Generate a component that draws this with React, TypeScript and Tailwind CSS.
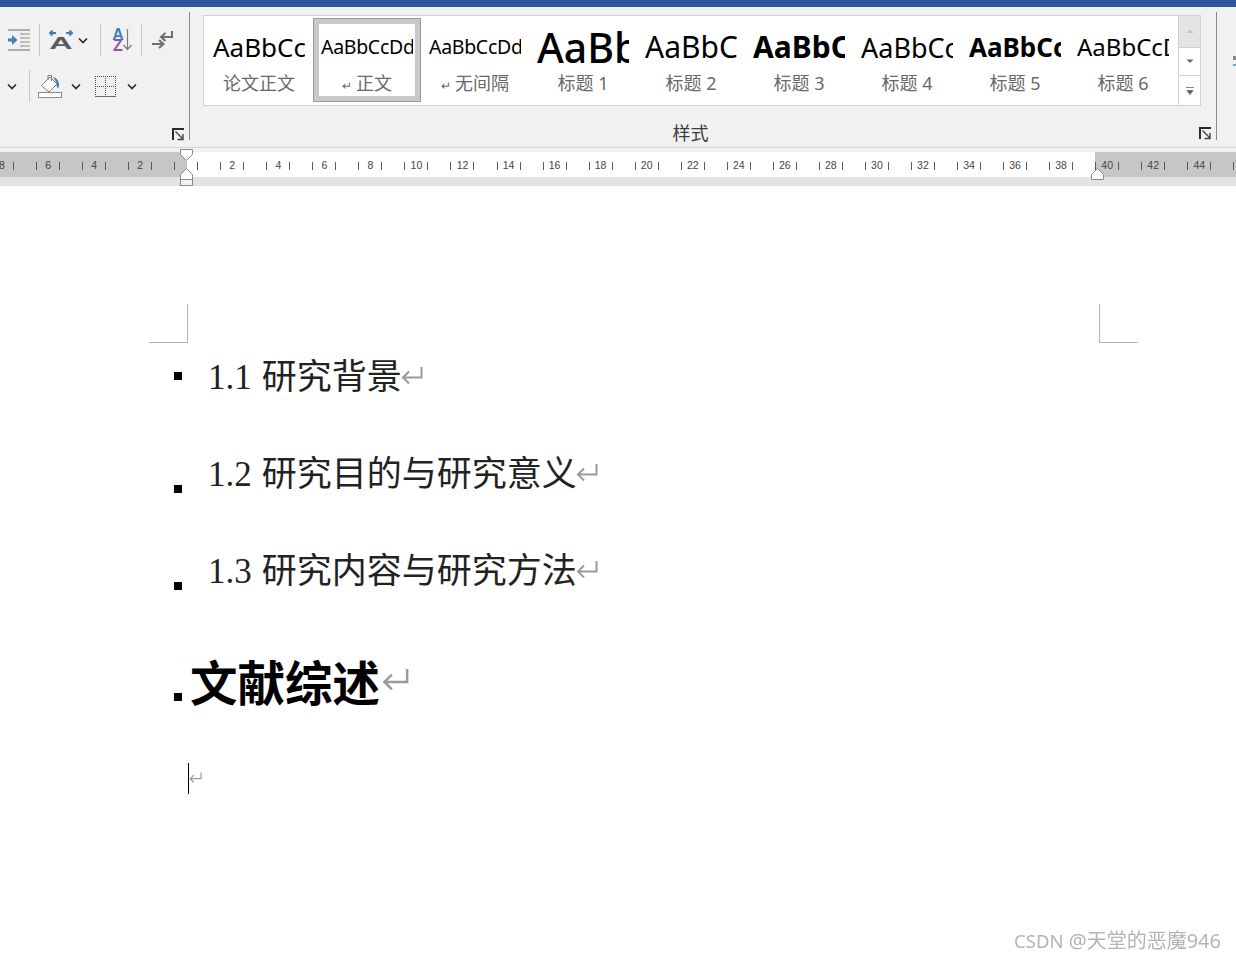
const SANS = "[font-family:'Noto_Sans','Noto_Sans_CJK_SC',sans-serif]";

function Chevron() {
  return (
    <svg width="10" height="7" viewBox="0 0 10 7" className="shrink-0">
      <path d="M1 1.500 5 5.500 9 1.500" fill="none" stroke="#262626" strokeWidth="1.6" />
    </svg>
  );
}

function Sep({ className }: { className: string }) {
  return <div className={`w-px shrink-0 bg-[#c6c6c6] ${className}`} />;
}

function ReturnMark({ w, h, sw = 1.6 }: { w: number; h: number; sw?: number }) {
  return (
    <svg width={w} height={h} viewBox="0 0 22 17" className="shrink-0">
      <path d="M20.500 0v10.500H2" fill="none" stroke="#999" strokeWidth={sw} />
      <path d="M8 4.500 2 10.500l6 6" fill="none" stroke="#999" strokeWidth={sw} />
    </svg>
  );
}

function Launcher() {
  return (
    <svg width="13" height="13" viewBox="0 0 13 13" className="shrink-0">
      <path d="M1 12V1h11" fill="none" stroke="#2a2a2a" strokeWidth="2" />
      <path d="M3.500 3.500 11 11M11 6v5.500H5.500" fill="none" stroke="#444" strokeWidth="1.4" />
    </svg>
  );
}

function IndentIcon() {
  return (
    <svg width="23" height="22" viewBox="0 0 23 22" className="shrink-0">
      <path d="M0 1h22M0 21h22" stroke="#6b6b6b" strokeWidth="1.2" />
      <path d="M12 5h10M12 9h10M12 13h10M12 17h10" stroke="#8a8a8a" strokeWidth="1.2" />
      <path d="M0 9.500h4V6l5.500 5L4 16v-3.500H0z" fill="#3f7fc0" />
    </svg>
  );
}

function FontAIcon() {
  return (
    <svg width="24" height="20" viewBox="0 0 24 20" className="shrink-0">
      <path d="M1 3h6M3.500 .5 1 3l2.500 2.500M23 3h-6M20.500 .5 23 3l-2.500 2.500" fill="none" stroke="#3f7fc0" strokeWidth="2" />
      <text
        x="6.300"
        y="19"
        textAnchor="middle"
        fontSize="17"
        fontWeight="700"
        fill="#5a5a5a"
        fontFamily="Liberation Sans"
        transform="scale(1.9 1)"
      >
        A
      </text>
    </svg>
  );
}

function SortIcon() {
  return (
    <svg width="20" height="24" viewBox="0 0 20 24" className="shrink-0">
      <text x="6" y="11.500" textAnchor="middle" fontSize="16" fontWeight="700" fill="#3f7fc0" fontFamily="Liberation Sans">A</text>
      <text x="6" y="23" textAnchor="middle" fontSize="16" fontWeight="700" fill="#8a55ad" fontFamily="Liberation Sans">Z</text>
      <path d="M15.500 1v20M11.500 17l4 4.500 4-4.500" fill="none" stroke="#7a7a7a" strokeWidth="1.2" />
    </svg>
  );
}

function MergeIcon() {
  return (
    <svg width="22" height="19" viewBox="0 0 22 19" className="shrink-0">
      <path d="M20 0v6H10M13.500 2 9 6l4.500 4" fill="none" stroke="#6e6e6e" strokeWidth="2" />
      <path d="M0 13h10M7 9l4.500 4L7 17" fill="none" stroke="#6e6e6e" strokeWidth="2" />
    </svg>
  );
}

function BucketIcon() {
  return (
    <svg width="24" height="24" viewBox="0 0 24 24" className="shrink-0">
      <path d="M12 3 3.500 11.500 11 18l8-8z" fill="#fff" stroke="#7d7d7d" strokeWidth="1" />
      <path d="M10 6V1.500h3.500V7" fill="none" stroke="#7d7d7d" strokeWidth="1" />
      <path d="M15 3c3.500 1 6 3.500 6 7.500 0 2-.5 3-1 4-1.500-1.500-1.500-3-1-5-1-2-2.500-4-4-6.500z" fill="#3f7fc0" />
      <rect x=".5" y="18.500" width="23" height="5" fill="#fff" stroke="#8a8a8a" />
    </svg>
  );
}

function BorderIcon() {
  return (
    <svg width="21" height="21" viewBox="0 0 21 21" className="shrink-0" shapeRendering="crispEdges">
      <path d="M0 .5h21M.5 0v20M20.500 0v20M0 10.500h21M10.500 0v20" fill="none" stroke="#4a4a4a" strokeDasharray="1 1" />
      <path d="M0 20.500h21" stroke="#6b6b6b" />
    </svg>
  );
}

function LeftRibbon() {
  return (
    <div className="flex h-[139px] w-[189px] shrink-0 flex-col">
      <div className="mt-[17px] flex h-[32px] items-center">
        <div className="ml-2"><IndentIcon /></div>
        <Sep className="ml-[8px] h-[32px]" />
        <div className="ml-[9px]"><FontAIcon /></div>
        <div className="ml-[5px]"><Chevron /></div>
        <Sep className="ml-[12px] h-[32px]" />
        <div className="ml-[11px]"><SortIcon /></div>
        <Sep className="ml-[9px] h-[32px]" />
        <div className="ml-[10px]"><MergeIcon /></div>
      </div>
      <div className="mt-[14px] flex h-[32px] items-center">
        <div className="ml-[7px]"><Chevron /></div>
        <Sep className="ml-[12px] h-[32px]" />
        <div className="ml-[8px]"><BucketIcon /></div>
        <div className="ml-[9px]"><Chevron /></div>
        <div className="ml-[14px]"><BorderIcon /></div>
        <div className="ml-[11px]"><Chevron /></div>
      </div>
      <div className="mt-[26px] flex justify-end pr-[4px]"><Launcher /></div>
    </div>
  );
}

type Style = { preview: string; label: string; cls: string; mark?: boolean; selected?: boolean };

const styles: Style[] = [
  { preview: "AaBbCcDd", label: "论文正文", cls: "text-[26px]" },
  { preview: "AaBbCcDd", label: "正文", cls: "text-[19.5px] tracking-[-0.3px]", mark: true, selected: true },
  { preview: "AaBbCcDd", label: "无间隔", cls: "text-[19.5px] tracking-[-0.3px]", mark: true },
  { preview: "AaBb", label: "标题 1", cls: "text-[41px] font-medium" },
  { preview: "AaBbCcD", label: "标题 2", cls: "text-[30px]" },
  { preview: "AaBbCcD", label: "标题 3", cls: "text-[30px] font-bold" },
  { preview: "AaBbCcDd", label: "标题 4", cls: "text-[27px]" },
  { preview: "AaBbCcDd", label: "标题 5", cls: "text-[26px] font-bold" },
  { preview: "AaBbCcDd", label: "标题 6", cls: "text-[24px]" },
];

function StyleItem({ s }: { s: Style }) {
  return (
    <div
      className={`flex w-[108px] shrink-0 flex-col items-center ${
        s.selected
          ? "mt-[2px] h-[84px] border-[6px] border-[#c9c8c6] outline outline-1 -outline-offset-1 outline-[#9a9a9a]"
          : "h-[89px] pt-[8px]"
      }`}
    >
      <div className={`flex h-[46px] w-[92px] items-center overflow-hidden whitespace-nowrap leading-none text-black ${s.cls}`}>
        {s.preview}
      </div>
      <div className="flex h-[26px] items-center gap-[4px] text-[18px] leading-none text-[#696969]">
        {s.mark && <span className="mt-[6px] text-[12px] text-[#666]">↵</span>}
        {s.label}
      </div>
    </div>
  );
}

function ScrollBtn({ kind }: { kind: "up" | "down" | "more" }) {
  return (
    <div
      className={`flex items-center justify-center border-b border-[#d0d0d0] last:border-b-0 ${
        kind === "up" ? "h-[32px] bg-[#e4e4e4]" : "h-[29px] bg-white"
      }`}
    >
      <svg width="10" height="10" viewBox="0 0 10 10">
        {kind === "up" && <path d="M1.500 7 5 3.500 8.500 7z" fill="#c4c4c4" />}
        {kind === "down" && <path d="M1.500 3.500 5 7 8.500 3.500z" fill="#666" />}
        {kind === "more" && <path d="M1 1.500h8M2 4.500h6L5 8.500z" fill="#666" stroke="#666" strokeWidth=".8" />}
      </svg>
    </div>
  );
}

function StylesGallery() {
  return (
    <div className="flex h-[139px] w-[1026px] shrink-0 flex-col pl-[13px]">
      <div className="mt-[8px] flex h-[91px] w-[998px] border border-[#d2d2d2] bg-white pl-px">
        {styles.map((s) => (
          <StyleItem key={s.label} s={s} />
        ))}
        <div className="ml-px flex w-[22px] flex-col border-l border-[#d0d0d0]">
          <ScrollBtn kind="up" />
          <ScrollBtn kind="down" />
          <ScrollBtn kind="more" />
        </div>
      </div>
      <div className="relative mt-[15px] flex h-[24px] w-[1009px] items-center justify-center text-[18px] leading-none text-[#3c3c3c]">
        <span className="-ml-[34px]">样式</span>
        <div className="absolute right-0 top-[6px]"><Launcher /></div>
      </div>
    </div>
  );
}

const rulerCells = [
  "8", "6", "4", "2", "",
  ...Array.from({ length: 22 }, (_, i) => String((i + 1) * 2)),
  "",
];

function Handle({ className, up }: { className: string; up?: boolean }) {
  return (
    <svg width="13" height="12" viewBox="0 0 13 12" className={`absolute ${className}`}>
      <path
        d={up ? "M6.500 .5 12.500 6.500v5H.5v-5z" : "M.5 .5h12v5L6.500 11.500.5 5.500z"}
        fill="#fff"
        stroke="#8a8a8a"
      />
    </svg>
  );
}

function Ruler() {
  return (
    <div className="relative h-[39px] bg-[#f1f1f1]">
      <div className="h-[5px] border-t border-[#d4d4d4]" />
      <div className="flex h-[25px] bg-[#c6c6c6]">
        <div className="ml-[187px] w-[908px] bg-white" />
      </div>
      <div className="h-[9px] bg-[#e3e3e3]" />
      {/* ticks sit on top of the grey / white zones */}
      <div className="absolute inset-x-0 top-[6px] flex h-[25px] overflow-hidden [font-family:'Liberation_Sans',sans-serif]">
        <div className="-ml-[21px] flex">
          {rulerCells.map((label, i) => (
            <div key={i} className="flex w-[46.05px] shrink-0 items-center justify-center">
              <div className="h-[8px] w-px bg-[#5a5a5a]" />
              <div className="w-[22px] text-center text-[10.500px] leading-none text-[#444]">{label}</div>
              <div className="h-[8px] w-px bg-[#5a5a5a]" />
            </div>
          ))}
        </div>
      </div>
      <Handle className="left-[180px] top-[2px]" />
      <Handle className="left-[180px] top-[21px]" up />
      <div className="absolute left-[180px] top-[32px] h-[7px] w-[13px] border border-[#8a8a8a] bg-[#f1f1f1]" />
      <Handle className="left-[1091px] top-[21px]" up />
    </div>
  );
}

function Para({ num, text, bulletTop }: { num: string; text: string; bulletTop: number }) {
  return (
    <div className="flex h-[50px] items-center">
      <div className="h-[8px] w-[8px] shrink-0 bg-black" style={{ transform: `translateY(${bulletTop}px)` }} />
      <div className="ml-[26px] flex translate-y-px items-center whitespace-nowrap text-[35px] leading-none text-[#222] [font-family:'Liberation_Serif','Noto_Sans_CJK_SC',serif]">
        <span className="mr-[10px]">{num}</span>
        {text}
        <div className="-ml-[1px] -translate-y-[2px]"><ReturnMark w={22} h={17} sw={2} /></div>
      </div>
    </div>
  );
}

function Document() {
  return (
    <div className="bg-white">
      <div className="ml-[149px] mr-[98px] flex justify-between pt-[118px]">
        <div className="h-[39px] w-[39px] border-b border-r border-[#b4b4b4]" />
        <div className="h-[39px] w-[39px] border-b border-l border-[#b4b4b4]" />
      </div>
      <div className="ml-[174px] mt-[8px] flex flex-col gap-[47px]">
        <Para num="1.1" text="研究背景" bulletTop={0} />
        <Para num="1.2" text="研究目的与研究意义" bulletTop={16} />
        <Para num="1.3" text="研究内容与研究方法" bulletTop={16} />
      </div>
      <div className="ml-[174px] mt-[58px] flex h-[60px] items-center">
        <div className="h-[8px] w-[8px] shrink-0 translate-y-[14px] bg-black" />
        <div className="ml-[8px] -translate-y-[2px] whitespace-nowrap text-[47.500px] font-bold leading-none text-black [font-family:'Noto_Sans_CJK_SC',sans-serif]">
          文献综述
        </div>
        <div className="ml-[2px] -translate-y-[4px]"><ReturnMark w={27} h={23} sw={2} /></div>
      </div>
      <div className="ml-[188px] mt-[50px] flex h-[31px] border-l border-black">
        <div className="mt-[8px]"><ReturnMark w={13} h={13} sw={2} /></div>
      </div>
    </div>
  );
}

export default function App() {
  return (
    <div className={`relative h-[960px] w-[1236px] overflow-hidden bg-white ${SANS}`}>
      <div className="h-[7px] bg-[#2b579a]" />
      <div className="flex h-[140px] bg-[#f1f1f1]">
        <LeftRibbon />
        <div className="mt-[5px] h-[128px] w-px shrink-0 bg-[#8c8c8c]" />
        <StylesGallery />
        <div className="mt-[5px] h-[128px] w-px shrink-0 bg-[#8c8c8c]" />
        {/* next group just peeks in at the window edge */}
        <svg width="4" height="14" viewBox="0 0 4 14" className="ml-[16px] mt-[48px] shrink-0">
          <path d="M0 1h4v4H0z" fill="#888" />
          <path d="M0 10h4" stroke="#6fa3d4" strokeWidth="2" />
        </svg>
      </div>
      <Ruler />
      <Document />
      <div className="absolute right-[15px] top-[929px] blur-[0.3px] text-[20px] leading-[24px] text-[#b4b4b4]">
        <span className="text-[18.500px]">CSDN</span> @天堂的恶魔946
      </div>
    </div>
  );
}
